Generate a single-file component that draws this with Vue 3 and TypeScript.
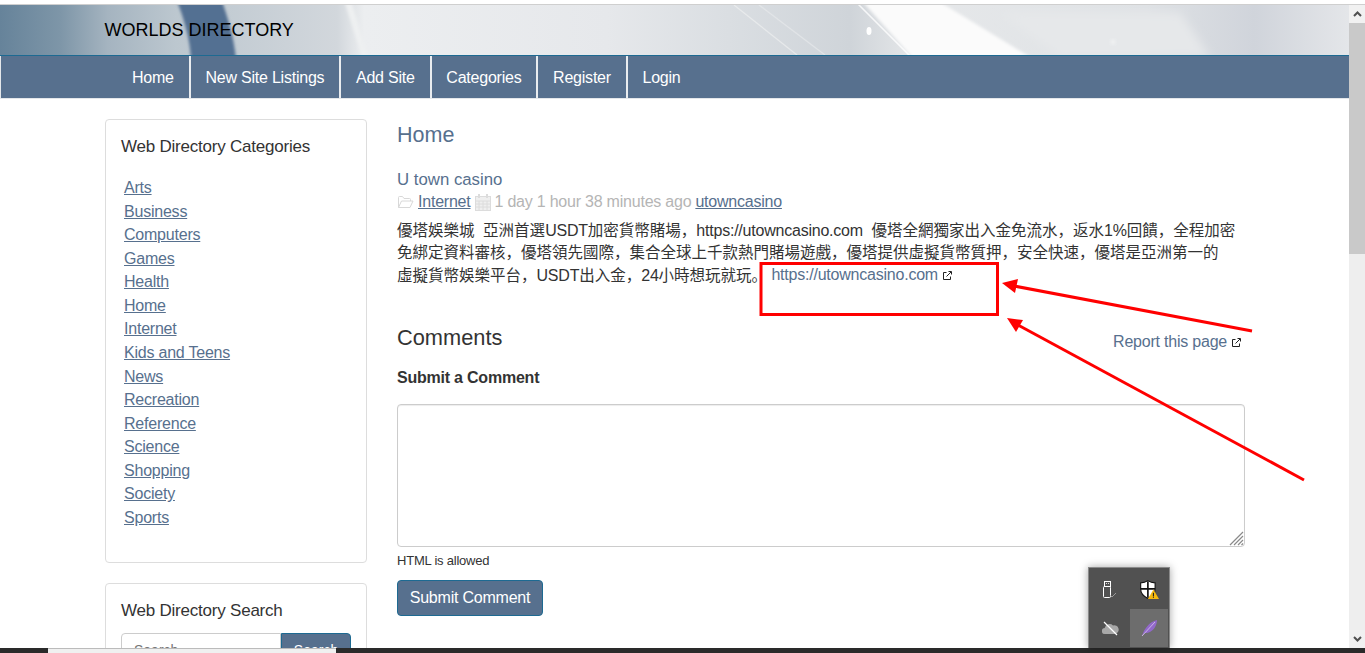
<template>
  <div class="screen">
    <div class="top-strip"></div>
    <div class="window">
      <div class="page">
        <header class="banner">
          <svg class="banner-art" width="1349" height="50" viewBox="0 0 1349 50">
            <defs>
              <linearGradient id="bannerBase" x1="0" x2="1" y1="0" y2="0">
                <stop offset="0" stop-color="#66839a" />
                <stop offset="0.045" stop-color="#7e96a8" />
                <stop offset="0.08" stop-color="#a5b4c0" />
                <stop offset="0.13" stop-color="#bcc7cf" />
                <stop offset="0.25" stop-color="#d2d7dc" />
                <stop offset="0.27" stop-color="#eceef0" />
                <stop offset="0.45" stop-color="#e6e8eb" />
                <stop offset="0.54" stop-color="#dadee2" />
                <stop offset="0.63" stop-color="#cfd4d9" />
                <stop offset="0.68" stop-color="#e6e8ea" />
                <stop offset="0.85" stop-color="#dfe2e5" />
                <stop offset="0.93" stop-color="#d0d4db" />
                <stop offset="1" stop-color="#e4e6e9" />
              </linearGradient>
              <filter id="soft"><feGaussianBlur stdDeviation="1.500" /></filter>
              <filter id="softer"><feGaussianBlur stdDeviation="5" /></filter>
            </defs>
            <rect width="1349" height="50" fill="url(#bannerBase)" />
            <path d="M177 -4H222C228 14 234 32 236 54H191C190 34 184 14 177 -4z" fill="#526f92" filter="url(#soft)" />
            <polygon points="345,-2 352,-2 368,52 362,52" fill="#eef0f1" filter="url(#soft)" />
            <polygon points="860,-6 935,-6 1030,52 912,52" fill="#fbfbfb" filter="url(#soft)" />
            <polygon points="1000,8 1180,8 1210,52 1060,52" fill="#e6e8ea" filter="url(#softer)" />
            <line x1="858" y1="-1" x2="910" y2="51" stroke="#ffffff" stroke-width="1.500" opacity="0.8" />
            <line x1="734" y1="0" x2="797" y2="50" stroke="#f1f2f2" stroke-width="1.200" opacity="0.65" />
            <line x1="759" y1="0" x2="825" y2="50" stroke="#e9ebed" stroke-width="1.200" opacity="0.65" />
            <ellipse cx="869" cy="26" rx="2.500" ry="4" fill="#ffffff" />
            <ellipse cx="1113" cy="37" rx="3" ry="3" fill="#f3f4f5" opacity="0.6" filter="url(#soft)" />
          </svg>
          <div class="brand">WORLDS DIRECTORY</div>
        </header>
        <nav class="nav">
          <a v-for="item in navItems" :key="item" class="nav-item">{{ item }}</a>
        </nav>

        <div class="layout">
          <aside class="sidebar">
            <section class="card categories">
              <h3 class="card-title">Web Directory Categories</h3>
              <ul class="cat-list">
                <li v-for="cat in categories" :key="cat"><a>{{ cat }}</a></li>
              </ul>
            </section>
            <section class="card search">
              <h3 class="card-title">Web Directory Search</h3>
              <div class="search-row">
                <input class="search-input" placeholder="Search..." />
                <button class="search-btn">Search</button>
              </div>
            </section>
          </aside>

          <main class="content">
            <h2 class="page-title">Home</h2>
            <h4 class="listing-title">U town casino</h4>
            <div class="meta">
              <svg class="meta-icon" width="17" height="14" viewBox="0 0 17 14" fill="none" stroke="#d8d8d8" stroke-width="1">
                <path d="M1.500 12.500V2.500a1 1 0 0 1 1-1h3l1.500 2h5.500a1 1 0 0 1 1 1v1.500" />
                <path d="M1.500 12.500h11.500l3-6.500H4.500z" />
              </svg>
              <a class="meta-link">Internet</a>
              <svg class="meta-icon" width="16" height="17" viewBox="0 0 16 17" fill="none" stroke="#dcdcdc" stroke-width="1">
                <rect x="0.500" y="2.500" width="15" height="14" fill="#efefef" />
                <path d="M0.500 7h15M0.500 10h15M0.500 13h15M4 7v9.500M8 7v9.500M12 7v9.500" />
                <path d="M4 0v4M12 0v4" stroke-width="2" />
              </svg>
              <span class="meta-time">1 day 1 hour 38 minutes ago</span>
              <a class="meta-link">utowncasino</a>
            </div>
            <p class="listing-body">
              優塔娛樂城&nbsp;&nbsp;亞洲首選<span class="lat">USDT</span>加密貨幣賭場，<span class="lat">https://utowncasino.com</span>&nbsp;&nbsp;優塔全網獨家出入金免流水，返水<span class="lat">1%</span>回饋，全程加密<br />免綁定資料審核，優塔領先國際，集合全球上千款熱門賭場遊戲，優塔提供虛擬貨幣質押，安全快速，優塔是亞洲第一的<br />虛擬貨幣娛樂平台，<span class="lat">USDT</span>出入金，<span class="lat">24</span>小時想玩就玩。
              <a class="ext-link lat">https://utowncasino.com<svg class="ext-icon" width="9" height="9" viewBox="0 0 9 9" fill="none" stroke="#222" stroke-width="1"><path d="M3.500 1.500H.5v7h7V5.500" /><path d="M3.500 5.500L8 1M5.500.5h3v3" /></svg></a>
            </p>

            <div class="comments-head">
              <h3 class="comments-title">Comments</h3>
              <a class="report">Report this page<svg class="ext-icon" width="9" height="9" viewBox="0 0 9 9" fill="none" stroke="#222" stroke-width="1"><path d="M3.500 1.500H.5v7h7V5.500" /><path d="M3.500 5.500L8 1M5.500.5h3v3" /></svg></a>
            </div>
            <label class="comment-label">Submit a Comment</label>
            <div class="textarea-wrap">
              <textarea class="comment-box"></textarea>
              <svg class="grip" width="15" height="15" viewBox="0 0 15 15" stroke="#8a8a8a" stroke-width="1.200">
                <path d="M1 14L14 1M5 14L14 5M9 14l5-5M12.500 14l1.500-1.500" />
              </svg>
            </div>
            <div class="hint">HTML is allowed</div>
            <button class="submit">Submit Comment</button>
          </main>
        </div>
      </div>

      <div class="scrollbar">
        <div class="scroll-btn">
          <svg width="9" height="6" viewBox="0 0 9 6" fill="none" stroke="#505050" stroke-width="2"><path d="M1 5l3.500-3.500L8 5" /></svg>
        </div>
        <div class="scroll-track"><div class="scroll-thumb"></div></div>
        <div class="scroll-btn">
          <svg width="9" height="6" viewBox="0 0 9 6" fill="none" stroke="#505050" stroke-width="2"><path d="M1 1l3.500 3.500L8 1" /></svg>
        </div>
      </div>
    </div>
    <div class="taskbar"><div class="task-tab"></div></div>

    <!-- annotation drawn on top of the screenshot -->
    <svg class="annotation" width="1365" height="653" viewBox="0 0 1365 653">
      <rect x="761" y="263.500" width="236.500" height="51" fill="none" stroke="#ff0000" stroke-width="3" />
      <line x1="1252" y1="331" x2="1014" y2="286" stroke="#ff0000" stroke-width="3" />
      <polygon points="1002,283 1018,279 1015,293" fill="#ff0000" />
      <line x1="1304" y1="480" x2="1018" y2="325" stroke="#ff0000" stroke-width="3" />
      <polygon points="1007,318 1023,320 1016,332" fill="#ff0000" />
    </svg>

    <div class="tray">
      <div class="tray-cell">
        <svg width="14" height="17" viewBox="0 0 14 17" fill="none" stroke="#fff" stroke-width="1">
          <rect x="0.500" y="5.500" width="7" height="11" rx="1" />
          <rect x="1.500" y="0.500" width="6" height="5" />
          <path d="M3 2.500h.8M5.200 2.500H6" />
          <path d="M7.500 14.500l1.500 1.500 4-4" stroke="#9a9a9a" />
        </svg>
      </div>
      <div class="tray-cell">
        <svg width="20" height="19" viewBox="0 0 18 17">
          <path d="M8 .5c2 1.400 4 2 6.500 2v5.500c0 4-2.500 6.500-6.500 8.500-4-2-6.500-4.500-6.500-8.500V2.500C4 2.500 6 1.900 8 .5z" fill="#fff" stroke="#111" stroke-width="1" />
          <path d="M8 1v15M1.500 8h13" stroke="#111" stroke-width="1.500" />
          <polygon points="13,8.500 18,17 8,17" fill="#f5b90f" />
          <path d="M13 11.500v3M13 15v1" stroke="#222" stroke-width="1" />
        </svg>
      </div>
      <div class="tray-cell">
        <svg width="17" height="15" viewBox="0 0 17 15">
          <path d="M3 13a3 3 0 0 1-.3-6A5 5 0 0 1 11 4.500 3.500 3.500 0 0 1 13.500 13z" fill="#a8a8a8" />
          <path d="M2 1l13 13" stroke="#fff" stroke-width="1.200" />
        </svg>
      </div>
      <div class="tray-cell tray-active">
        <svg width="17" height="18" viewBox="0 0 17 18">
          <path d="M1 17C3 10 8 3 16 1c0 5-3 10-7 12-2 1-4 1-5.500 1z" fill="#9168c9" />
          <path d="M1 17L14 3" stroke="#d9c8f0" stroke-width="0.800" />
        </svg>
      </div>
    </div>
  </div>
</template>

<script setup lang="ts">
const navItems: string[] = ['Home', 'New Site Listings', 'Add Site', 'Categories', 'Register', 'Login']

const categories: string[] = [
  'Arts',
  'Business',
  'Computers',
  'Games',
  'Health',
  'Home',
  'Internet',
  'Kids and Teens',
  'News',
  'Recreation',
  'Reference',
  'Science',
  'Shopping',
  'Society',
  'Sports'
]
</script>

<style>
html,
body {
  margin: 0;
  height: 100%;
  overflow: hidden;
}
</style>

<style scoped>
.screen {
  position: relative;
  display: flex;
  flex-direction: column;
  width: 1365px;
  height: 653px;
  overflow: hidden;
  background: #fff;
  font-family: 'Liberation Sans', 'Noto Sans CJK SC', Arial, sans-serif;
  font-size: 16px;
  letter-spacing: -0.220px;
  color: #333;
}

.top-strip {
  flex: 0 0 5px;
  box-sizing: border-box;
  background: #fff;
  border-bottom: 1px solid #cfcfcf;
}

.window {
  flex: 1;
  min-height: 0;
  display: flex;
}

.page {
  flex: 1;
  min-width: 0;
  overflow: hidden;
}

.banner {
  position: relative;
  height: 50px;
  overflow: hidden;
  border-bottom: 1px solid #1d6a92;
}

.banner-art {
  position: absolute;
  top: 0;
  left: 0;
}

.brand {
  position: relative;
  padding: 14px 0 0 104.500px;
  font-size: 18px;
  letter-spacing: 0;
  line-height: 22px;
  color: #000;
}

.nav {
  display: flex;
  height: 42px;
  padding-left: 116.200px;
  background: #57708e;
  border-bottom: 1px solid #e4e7ea;
  border-left: 1px solid #e4e7ea;
}

.nav-item {
  padding: 1px 14.800px 0;
  line-height: 42px;
  color: #fff;
  border-right: 2px solid #e9ecef;
}

.nav-item:last-child {
  border-right: 0;
}

.layout {
  display: flex;
  gap: 30px;
  padding: 20px 0 0 105px;
}

.sidebar {
  flex: 0 0 262px;
  display: flex;
  flex-direction: column;
  gap: 20px;
}

.card {
  border: 1px solid #ddd;
  border-radius: 4px;
  padding: 17px 15px 15px;
  box-sizing: border-box;
}

.categories {
  height: 444px;
}

.card-title {
  margin: 0;
  font-size: 17px;
  font-weight: 400;
  line-height: 20px;
  color: #333;
}

.cat-list {
  list-style: none;
  margin: 19px 0 0;
  padding: 0 0 0 3px;
}

.cat-list li {
  line-height: 23.570px;
}

.cat-list a {
  color: #57708e;
  text-decoration: underline;
}

.search-row {
  display: flex;
  margin-top: 12px;
}

.search-input {
  width: 160px;
  height: 34px;
  padding: 0 12px;
  box-sizing: border-box;
  border: 1px solid #ccc;
  border-radius: 4px 0 0 4px;
  font: inherit;
  font-size: 14px;
}

.search-btn {
  width: 70px;
  height: 34px;
  border: 1px solid #1d6a92;
  border-radius: 0 4px 4px 0;
  background: #57708e;
  color: #fff;
  font: inherit;
  font-size: 14px;
}

.content {
  width: 848px;
}

.page-title {
  margin: 0;
  padding-top: 4px;
  font-size: 21.500px;
  font-weight: 400;
  letter-spacing: 0;
  line-height: 24px;
  color: #57708e;
}

.listing-title {
  margin: 23px 0 0;
  font-size: 16.800px;
  font-weight: 400;
  letter-spacing: 0;
  line-height: 20px;
  color: #57708e;
}

.meta {
  display: flex;
  align-items: center;
  gap: 4px;
  margin-top: 1px;
  line-height: 22px;
  color: #b5b5b5;
}

.meta-link {
  color: #57708e;
  text-decoration: underline;
}

.listing-body {
  margin: 6.700px 0 0;
  font-size: 15.500px;
  letter-spacing: 0;
  line-height: 22.400px;
  color: #333;
}

.lat {
  font-size: 16px;
  letter-spacing: -0.220px;
  line-height: 0;
}

.ext-link,
.report {
  color: #57708e;
}

.ext-link {
  vertical-align: 1px;
}

.ext-icon {
  margin-left: 5px;
}

.comments-head {
  display: flex;
  justify-content: space-between;
  align-items: flex-end;
  margin-top: 37.300px;
}

.comments-title {
  margin: 0;
  font-size: 21.800px;
  font-weight: 400;
  letter-spacing: 0;
  line-height: 28px;
  color: #333;
}

.report {
  margin-right: 4px;
  margin-bottom: 1px;
}

.comment-label {
  display: block;
  margin-top: 15px;
  font-weight: 700;
  line-height: 22px;
  color: #333;
}

.textarea-wrap {
  position: relative;
  margin-top: 15px;
}

.comment-box {
  display: block;
  width: 100%;
  height: 143px;
  box-sizing: border-box;
  border: 1px solid #ccc;
  border-radius: 4px;
  background: #fff;
  resize: none;
  box-shadow: inset 0 1px 1px rgba(0, 0, 0, 0.075);
}

.grip {
  position: absolute;
  right: 1px;
  bottom: 1px;
}

.hint {
  margin-top: 6px;
  font-size: 13px;
  line-height: 16px;
  color: #333;
}

.submit {
  display: block;
  margin-top: 11px;
  width: 146px;
  height: 36px;
  border: 1px solid #1d6a92;
  border-radius: 4px;
  background: #57708e;
  color: #fff;
  font: inherit;
  letter-spacing: inherit;
}

.scrollbar {
  flex: 0 0 16px;
  display: flex;
  flex-direction: column;
  background: #eee;
}

.scroll-btn {
  display: flex;
  align-items: center;
  justify-content: center;
  flex: 0 0 18px;
  background: #f1f1f1;
}

.scroll-track {
  flex: 1;
}

.scroll-thumb {
  height: 231px;
  background: #c9c9c9;
}

.annotation {
  position: absolute;
  top: 0;
  left: 0;
  pointer-events: none;
}

.tray {
  position: absolute;
  left: 1088px;
  top: 567px;
  display: grid;
  grid-template-columns: 40px 38px;
  grid-auto-rows: 40px 38px;
  padding: 1px 1px 0 1px;
  width: 82px;
  height: 81px;
  box-sizing: border-box;
  background: #515151;
  border: 1px solid #8a8a8a;
  border-bottom: 0;
  box-shadow: 0 0 8px rgba(0, 0, 0, 0.35);
}

.tray-cell {
  display: flex;
  align-items: center;
  justify-content: center;
}

.tray-active {
  background: #6d6d6d;
}

.taskbar {
  flex: 0 0 5px;
  background: #2a2a2a;
}

.task-tab {
  margin-left: 48px;
  width: 288px;
  height: 5px;
  box-sizing: border-box;
  background: #f0f0f0;
  border-top: 1px solid #bbb;
}
</style>
